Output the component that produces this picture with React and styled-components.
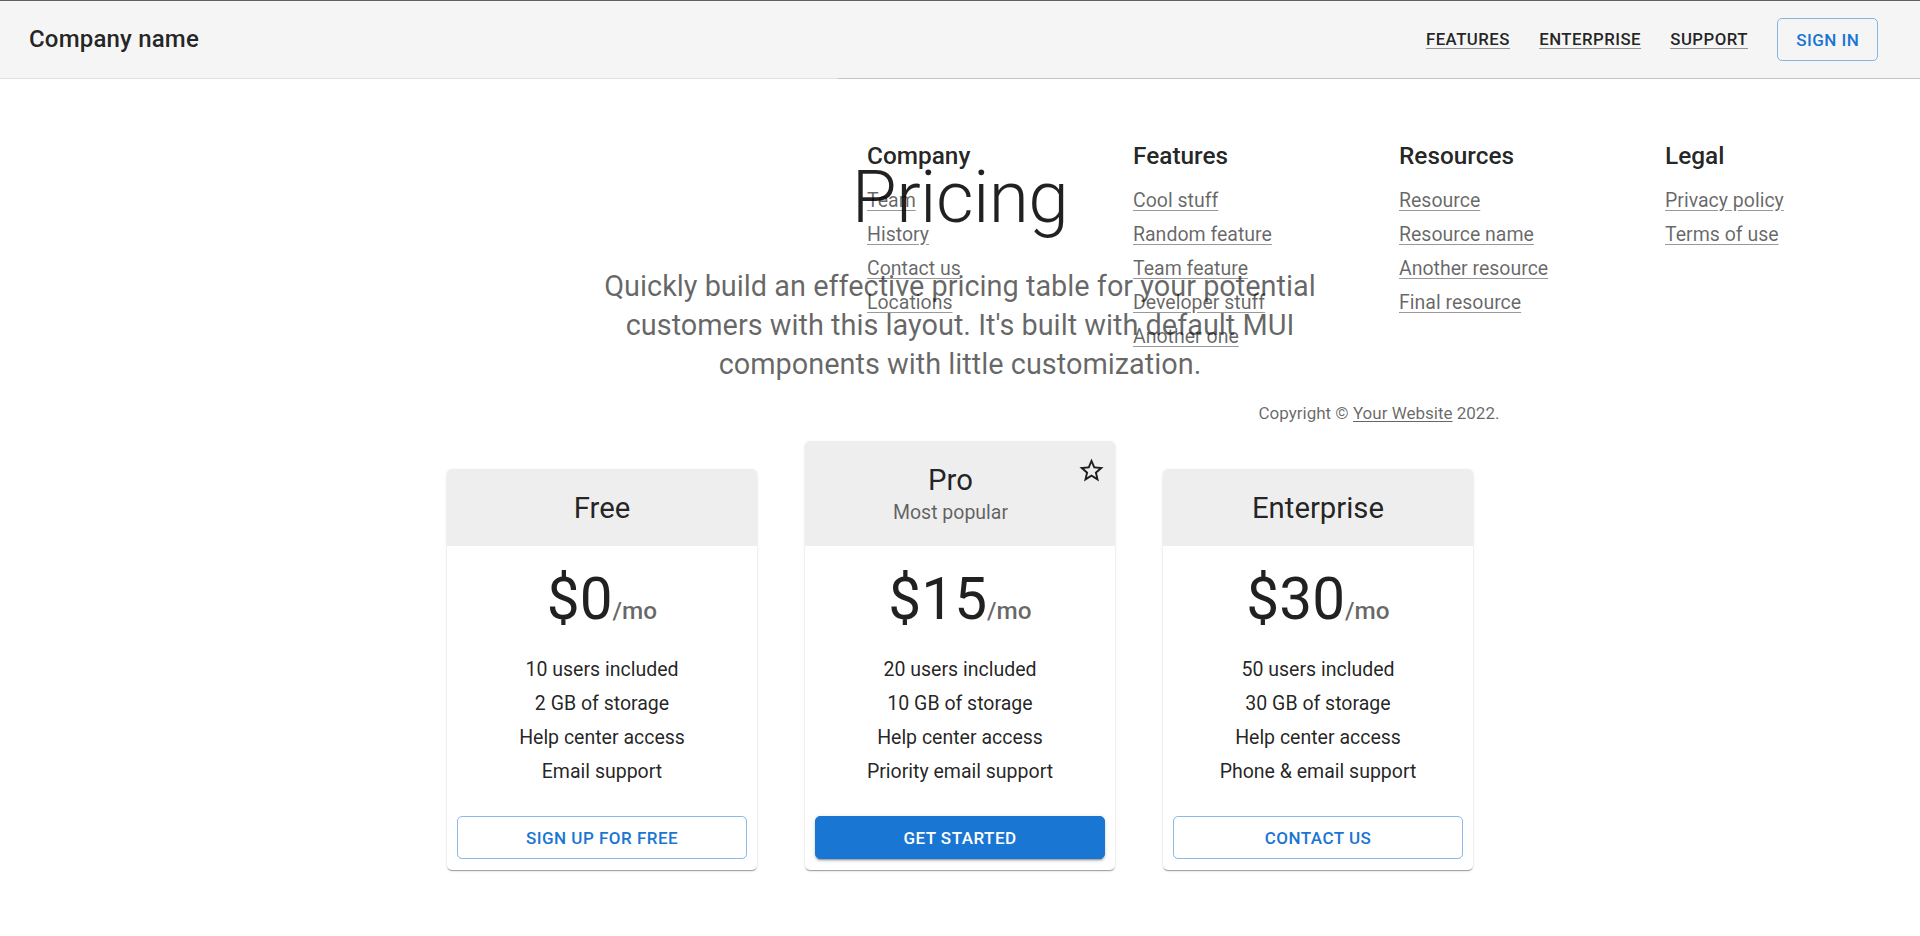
import React from 'react';
import styled, { createGlobalStyle } from 'styled-components';

const primary = '#1976d2';
const textPrimary = 'rgba(0, 0, 0, 0.87)';
const textSecondary = 'rgba(0, 0, 0, 0.6)';

const GlobalStyle = createGlobalStyle`
  html, body {
    margin: 0;
    padding: 0;
    background: #fff;
    font-family: Roboto, "Liberation Sans", Arial, sans-serif;
    color: ${textPrimary};
    overflow-x: hidden;
  }
  * { box-sizing: border-box; }
`;

const Page = styled.div`
  position: relative;
  min-height: 100vh;
`;

const AppBar = styled.header`
  display: flex;
  align-items: center;
  height: 79px;
  padding: 0 27px 0 29px;
  background: #f5f5f5;
  border-top: 1px solid #616161;
  border-bottom: 1px solid #e0e0e0;
`;

const Brand = styled.h6`
  flex: 1;
  margin: 0;
  font-size: 24px;
  font-weight: 500;
  line-height: 1.6;
  letter-spacing: 0.0075em;
`;

const Nav = styled.nav`
  display: flex;
  align-items: center;
`;

const NavLink = styled.a`
  margin: 0 14.6px;
  font-size: 16.8px;
  font-weight: 500;
  line-height: 1.75;
  letter-spacing: 0.02857em;
  text-transform: uppercase;
  color: ${textPrimary};
  text-decoration: underline;
  text-decoration-color: rgba(0, 0, 0, 0.4);
  text-underline-offset: 3px;
  cursor: pointer;
`;

const Button = styled.button`
  display: flex;
  align-items: center;
  justify-content: center;
  height: 43px;
  padding: 0 18px;
  border-radius: 5px;
  font-family: inherit;
  font-size: 17px;
  font-weight: 500;
  letter-spacing: 0.02857em;
  text-transform: uppercase;
  cursor: pointer;
  width: ${p => (p.$full ? '100%' : 'auto')};
  margin: ${p => (p.$full ? '0' : '0 14.6px')};
  color: ${p => (p.$variant === 'contained' ? '#fff' : primary)};
  background: ${p => (p.$variant === 'contained' ? primary : 'transparent')};
  border: 1px solid ${p => (p.$variant === 'contained' ? primary : 'rgba(25, 118, 210, 0.5)')};
  box-shadow: ${p =>
    p.$variant === 'contained'
      ? '0 3px 1px -2px rgba(0,0,0,0.2), 0 2px 2px 0 rgba(0,0,0,0.14), 0 1px 5px 0 rgba(0,0,0,0.12)'
      : 'none'};
`;

const Hero = styled.main`
  max-width: 732px;
  margin: 0 auto;
  padding: 75px 0 57px;
  text-align: center;
`;

const HeroTitle = styled.h1`
  margin: 0 0 25.6px;
  font-size: 73px;
  font-weight: 300;
  line-height: 1.2;
  letter-spacing: -0.00833em;
`;

const HeroText = styled.p`
  margin: 0;
  font-size: 28.9px;
  font-weight: 400;
  line-height: 39px;
  color: ${textSecondary};
`;

const CardRow = styled.section`
  display: flex;
  justify-content: center;
  align-items: flex-end;
  gap: 48px;
`;

const PlanCard = styled.div`
  width: 310px;
  background: #fff;
  border-radius: 5px;
  overflow: hidden;
  box-shadow: 0 2px 1px -1px rgba(0,0,0,0.2), 0 1px 1px 0 rgba(0,0,0,0.14), 0 1px 3px 0 rgba(0,0,0,0.12);
`;

const PlanHeader = styled.div`
  display: flex;
  align-items: center;
  padding: 19.5px;
  background: #eeeeee;
`;

const HeaderText = styled.div`
  flex: 1;
  text-align: center;
`;

const PlanTitle = styled.div`
  font-size: 29.3px;
  font-weight: 400;
  line-height: 38px;
  color: ${textPrimary};
`;

const PlanSub = styled.div`
  font-size: 19.5px;
  line-height: 28px;
  color: ${textSecondary};
`;

const StarSlot = styled.div`
  align-self: flex-start;
  display: flex;
  margin: -5px -10px 0 0;
  color: ${textPrimary};
`;

const PlanBody = styled.div`
  padding: 19px 19.5px 0;
`;

const PriceRow = styled.div`
  display: flex;
  justify-content: center;
  align-items: baseline;
  margin-bottom: 19.5px;
`;

const Price = styled.span`
  font-size: 58.5px;
  font-weight: 400;
  line-height: 68px;
  color: ${textPrimary};
`;

const Period = styled.span`
  font-size: 24.4px;
  font-weight: 500;
  line-height: 1.6;
  color: ${textSecondary};
`;

const FeatureList = styled.ul`
  list-style: none;
  margin: 0;
  padding: 0;
`;

const Feature = styled.li`
  text-align: center;
  font-size: 19.5px;
  line-height: 34px;
  color: ${textPrimary};
`;

const PlanActions = styled.div`
  display: flex;
  padding: 27.5px 10px 11px;
`;

const Footer = styled.footer`
  position: absolute;
  top: 78px;
  left: 838px;
  width: 1082px;
  padding: 57px 29px 0;
  border-top: 1px solid rgba(0, 0, 0, 0.12);
`;

const FooterGrid = styled.div`
  display: grid;
  grid-template-columns: 266px 266px 266px 1fr;
  align-items: start;
`;

const FooterHeading = styled.h6`
  margin: 0 0 8.5px;
  font-size: 24.4px;
  font-weight: 500;
  line-height: 39px;
  color: ${textPrimary};
`;

const FooterList = styled.ul`
  list-style: none;
  margin: 0;
  padding: 0;
`;

const FooterLink = styled.a`
  font-size: 19.5px;
  line-height: 34px;
  color: ${textSecondary};
  text-decoration: underline;
  text-decoration-color: rgba(0, 0, 0, 0.4);
  text-underline-offset: 3px;
  cursor: pointer;
`;

const Copyright = styled.p`
  margin: 47px 0 0;
  text-align: center;
  font-size: 17px;
  line-height: 24px;
  color: ${textSecondary};

  a {
    color: inherit;
    text-decoration: underline;
    text-underline-offset: 2px;
  }
`;

const StarBorder = () => (
  <svg width="29" height="29" viewBox="0 0 24 24" fill="currentColor">
    <path d="M22 9.24l-7.19-.62L12 2 9.19 8.63 2 9.24l5.46 4.73L5.82 21 12 17.27 18.18 21l-1.63-7.03L22 9.24zM12 15.4l-3.76 2.27 1-4.28-3.32-2.88 4.38-.38L12 6.1l1.71 4.04 4.38.38-3.32 2.88 1 4.28L12 15.4z" />
  </svg>
);

const tiers = [
  {
    title: 'Free',
    price: '0',
    features: ['10 users included', '2 GB of storage', 'Help center access', 'Email support'],
    button: 'Sign up for free',
    variant: 'outlined',
  },
  {
    title: 'Pro',
    subheader: 'Most popular',
    price: '15',
    features: ['20 users included', '10 GB of storage', 'Help center access', 'Priority email support'],
    button: 'Get started',
    variant: 'contained',
  },
  {
    title: 'Enterprise',
    price: '30',
    features: ['50 users included', '30 GB of storage', 'Help center access', 'Phone & email support'],
    button: 'Contact us',
    variant: 'outlined',
  },
];

const footers = [
  { title: 'Company', items: ['Team', 'History', 'Contact us', 'Locations'] },
  { title: 'Features', items: ['Cool stuff', 'Random feature', 'Team feature', 'Developer stuff', 'Another one'] },
  { title: 'Resources', items: ['Resource', 'Resource name', 'Another resource', 'Final resource'] },
  { title: 'Legal', items: ['Privacy policy', 'Terms of use'] },
];

const App = () => {
  return (
    <Page>
      <GlobalStyle />
      <AppBar>
        <Brand>Company name</Brand>
        <Nav>
          <NavLink>Features</NavLink>
          <NavLink>Enterprise</NavLink>
          <NavLink>Support</NavLink>
        </Nav>
        <Button $variant="outlined">Sign in</Button>
      </AppBar>

      <Hero>
        <HeroTitle>Pricing</HeroTitle>
        <HeroText>
          Quickly build an effective pricing table for your potential customers with this layout. It's built with
          default MUI components with little customization.
        </HeroText>
      </Hero>

      <CardRow>
        {tiers.map(tier => (
          <PlanCard key={tier.title}>
            <PlanHeader>
              <HeaderText>
                <PlanTitle>{tier.title}</PlanTitle>
                {tier.subheader && <PlanSub>{tier.subheader}</PlanSub>}
              </HeaderText>
              {tier.title === 'Pro' && (
                <StarSlot>
                  <StarBorder />
                </StarSlot>
              )}
            </PlanHeader>
            <PlanBody>
              <PriceRow>
                <Price>${tier.price}</Price>
                <Period>/mo</Period>
              </PriceRow>
              <FeatureList>
                {tier.features.map(f => (
                  <Feature key={f}>{f}</Feature>
                ))}
              </FeatureList>
            </PlanBody>
            <PlanActions>
              <Button $full $variant={tier.variant}>{tier.button}</Button>
            </PlanActions>
          </PlanCard>
        ))}
      </CardRow>

      <Footer>
        <FooterGrid>
          {footers.map(col => (
            <div key={col.title}>
              <FooterHeading>{col.title}</FooterHeading>
              <FooterList>
                {col.items.map(item => (
                  <li key={item}>
                    <FooterLink>{item}</FooterLink>
                  </li>
                ))}
              </FooterList>
            </div>
          ))}
        </FooterGrid>
        <Copyright>
          Copyright © <a>Your Website</a> 2022.
        </Copyright>
      </Footer>
    </Page>
  );
};

export default App;
